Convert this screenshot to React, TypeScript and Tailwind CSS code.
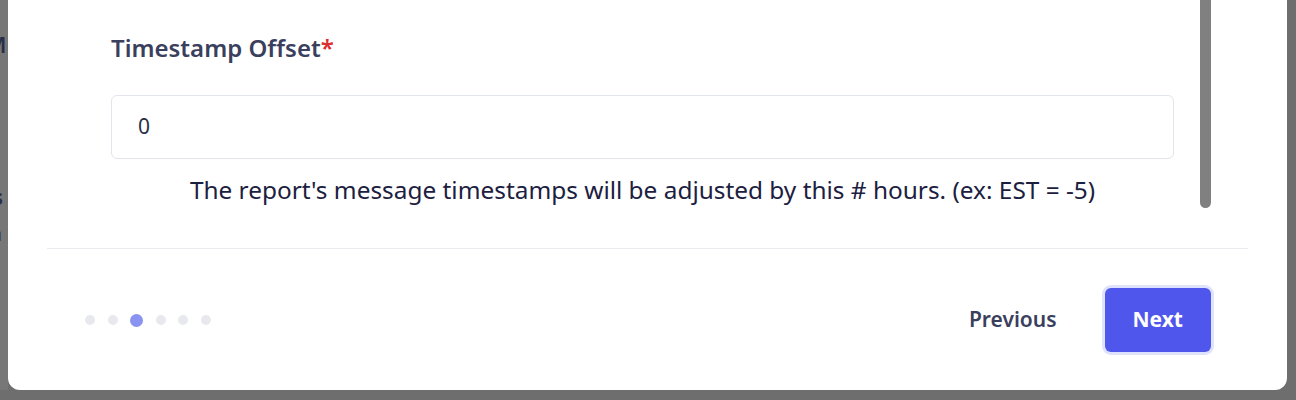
export default function App() {
  const steps = [0, 1, 2, 3, 4, 5];
  const current = 2;

  return (
    <div
      className="relative h-[400px] w-[1296px] overflow-hidden bg-[#6e6e6e]"
      style={{ fontFamily: '"Noto Sans", "Open Sans", sans-serif' }}
    >
      {/* page behind the overlay */}
      <div className="flex h-[390px] w-[8px] flex-col bg-[#777777] pt-[30px] text-[#2a2f48]">
        <div className="-ml-[14px] text-[22px] font-semibold leading-[28px]">M</div>
        <div className="-ml-[8px] mt-[124px] text-[22px] font-bold leading-[28px]">s</div>
        <div className="-ml-[9px] mt-[10px] text-[20px] leading-[28px] text-[#3a3f5a]">a</div>
      </div>

      {/* dialog */}
      <div className="absolute left-[8px] right-[9px] top-0 bottom-[10px] flex flex-col rounded-b-xl bg-white px-[39px]">
        <div className="flex">
          <div className="flex-1 pl-16 pt-[34px] pb-[2px]">
            <label className="block text-[24px] font-semibold leading-[28px] text-[#3b3f5e]">
              Timestamp Offset<span className="text-[#dc2f2f]">*</span>
            </label>
            <div className="mt-[33px] flex h-16 items-center rounded-md border border-[#e3e5ec] px-[26px] text-[21px] text-[#2b2f45]">
              0
            </div>
            <p className="mt-[15px] text-center text-[24.4px] leading-[32px] text-[#1c2040]">
              The report's message timestamps will be adjusted by this # hours. (ex: EST = -5)
            </p>
          </div>
          <div className="w-[26px]" />
          <div className="w-[11px] rounded-b-full bg-[#808080]" />
          <div className="w-[37px]" />
        </div>

        <div className="mt-[40px] border-t border-[#ebebf0]" />

        <div className="flex items-center justify-between pt-[39px] pb-[38px]">
          <div className="ml-[38px] flex items-center gap-[12.5px]">
            {steps.map((s) =>
              s === current ? (
                <span key={s} className="h-[13px] w-[13px] rounded-full bg-[#8a92f2]" />
              ) : (
                <span key={s} className="h-[10px] w-[10px] rounded-full bg-[#e8e9ee]" />
              )
            )}
          </div>
          <div className="mr-[37px] flex items-center gap-[22px]">
            <button className="h-16 px-[26px] text-[21px] font-semibold text-[#3b3f5e]">
              Previous
            </button>
            <button className="h-16 rounded-md bg-[#4f56ec] px-[28px] text-[21px] font-bold text-white ring-[3px] ring-[#dfe2fc]">
              Next
            </button>
          </div>
        </div>
      </div>
    </div>
  );
}
